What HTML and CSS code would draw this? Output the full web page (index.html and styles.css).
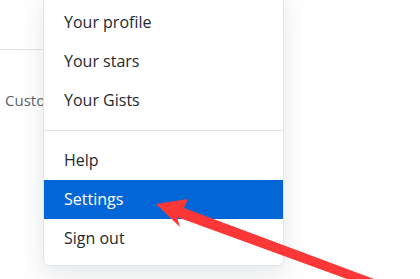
FILE: index.html
```html
<!DOCTYPE html>
<html lang="en">
<head>
  <meta charset="UTF-8">
  <title>Account menu</title>
  <link rel="stylesheet" href="styles.css">
</head>
<body>
  <div class="page-head"></div>
  <p class="pins">Custo</p>

  <div class="dropdown">
    <a class="item" href="#">Your profile</a>
    <a class="item" href="#">Your stars</a>
    <a class="item" href="#">Your Gists</a>
    <div class="divider"></div>
    <a class="item" href="#">Help</a>
    <a class="item active" href="#">Settings</a>
    <a class="item" href="#">Sign out</a>
  </div>

  <svg class="arrow" width="420" height="279" viewBox="0 0 420 279">
    <polygon points="156,204 188,199 184,208 374,279 347,279 177,217 180,227" fill="#fc3737"/>
  </svg>
</body>
</html>
```

FILE: styles.css
```css
body {
  margin: 0;
  font-family: "Open Sans", "Noto Sans", sans-serif;
  background-color: white;
  width: 420px;
  height: 279px;
  overflow: hidden;
  position: relative;
}
.page-head {
  width: 60px;
  height: 49px;
  border-bottom: 1px solid #dfe2e5;
}
.pins {
  margin: 40px 0 0 5px;
  font-size: 15px;
  color: #586069;
}
.dropdown {
  position: absolute;
  left: 43px;
  top: -6px;
  width: 239px;
  padding: 8px 0 7px;
  background-color: white;
  border: 1px solid #e1e4e8;
  border-radius: 6px;
  box-shadow: 0 8px 24px rgba(149, 157, 165, 0.25);
}
.item {
  display: block;
  height: 39px;
  line-height: 39px;
  padding-left: 20px;
  font-size: 16px;
  color: #24292e;
  text-decoration: none;
}
.item.active {
  background-color: #0366d6;
  color: white;
}
.divider {
  height: 1px;
  margin: 10px 0;
  background-color: #e1e4e8;
}
.arrow {
  position: absolute;
  left: 0;
  top: 0;
}
```
